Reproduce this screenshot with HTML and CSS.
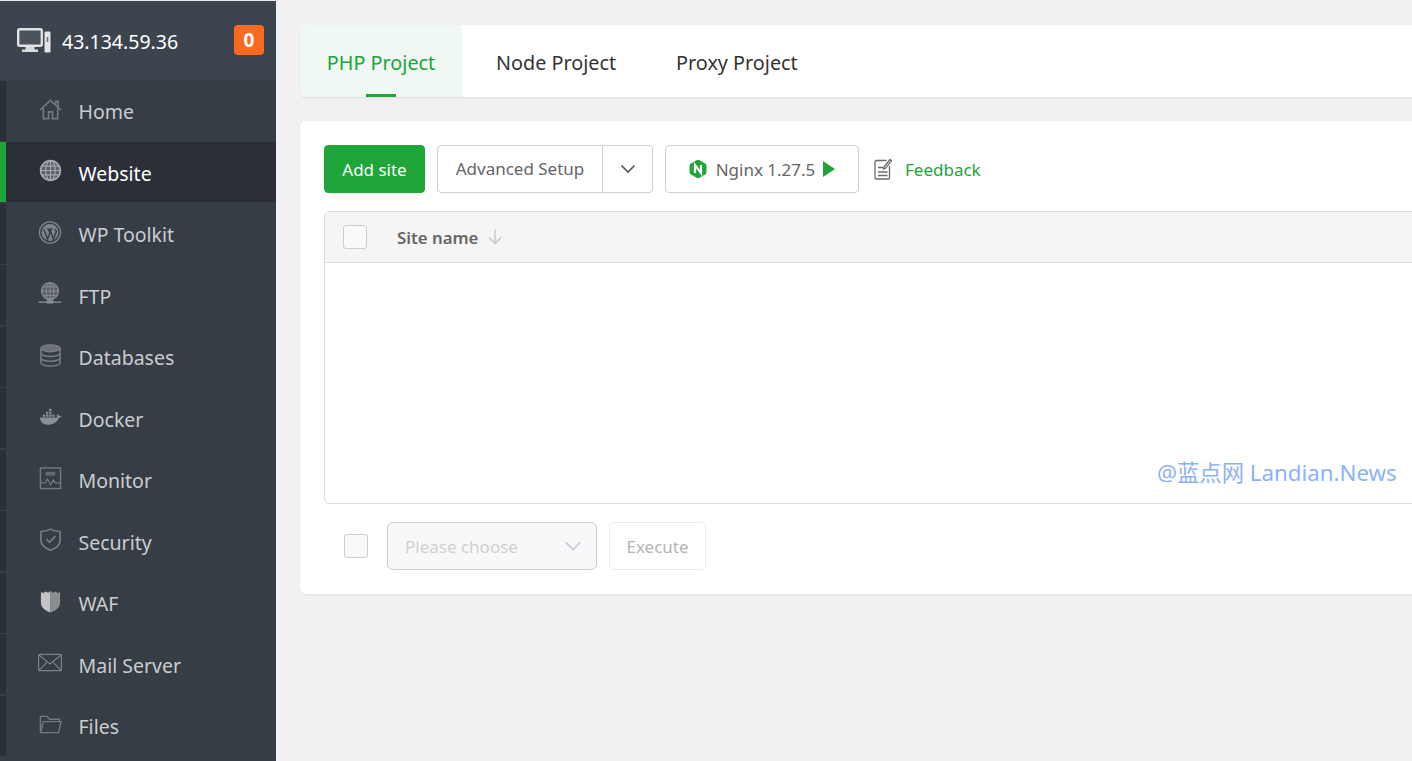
FILE: index.html
```html
<!DOCTYPE html>
<html lang="en">
<head>
<meta charset="utf-8">
<title>Website</title>
<link rel="stylesheet" href="styles.css">
</head>
<body>
<aside class="sidebar">
  <header class="server">
    <svg class="server-icon" viewBox="0 0 34 25"><rect x="1.200" y="1.200" width="23.600" height="16.500" rx="1.500" fill="#4b535b" stroke="#dfe1e3" stroke-width="2.400"/><path d="M8.500 19h9v2.500h3.500V24H5v-2.500h3.500z" fill="#d8dadc"/><rect x="27.500" y="3.500" width="6" height="21" rx="1" fill="#e3e5e7"/><rect x="29.700" y="9" width="1.600" height="5" fill="#6d747a"/></svg>
    <span class="server-ip">43.134.59.36</span>
    <span class="badge">0</span>
  </header>
  <nav class="nav">
    <a class="nav-item"><svg class="nav-icon" viewBox="0 0 24 24" fill="none" stroke="#73797f" stroke-width="1.700"><path d="M1 12.500 12 2.500l11 10M4.500 10.500v11h5.500v-7h4v7h5.500v-11M17.500 6.500V3.500h2.500v5.500"/></svg><span>Home</span></a>
    <a class="nav-item active"><svg class="nav-icon" viewBox="0 0 24 24" fill="none" stroke="#a5a8ab" stroke-width="1.200"><circle cx="12" cy="12" r="10.300" fill="#5d6167" stroke-width="1.800"/><ellipse cx="12" cy="12" rx="5" ry="10.300"/><path d="M12 1.700v20.600M1.700 12h20.600M3 7.500h18M3 16.500h18"/></svg><span>Website</span></a>
    <a class="nav-item"><svg class="nav-icon wide" viewBox="0 0 24 24" fill="none" stroke="#80858a"><circle cx="12" cy="12" r="11" stroke-width="1.300"/><circle cx="12" cy="12" r="8.800" fill="#80858a" stroke="none"/><path d="M5.500 8.500 9.500 19l2.500-7-1.800-3.500M9 8.500h6M12 8.500 15.500 19l2.800-7c.6-1.500-.3-2.800-1.300-3.500" stroke="#363d44" stroke-width="1.500"/></svg><span>WP Toolkit</span></a>
    <a class="nav-item"><svg class="nav-icon wide" viewBox="0 0 24 24" fill="none" stroke="#8a8f93" stroke-width="1"><circle cx="12" cy="9.500" r="8.800" fill="#5a6066" stroke-width="1.400"/><ellipse cx="12" cy="9.500" rx="4" ry="8.800"/><path d="M12 .7v17.600M3.200 9.500h17.600M4.500 5h15M4.500 14h15"/><path d="M0 21h24" stroke-width="1.400"/><rect x="8.500" y="19" width="7" height="3.500" fill="#8a8f93" stroke="none"/></svg><span>FTP</span></a>
    <a class="nav-item"><svg class="nav-icon db" viewBox="0 0 24 24" fill="none" stroke="#7a7f84" stroke-width="1.500"><ellipse cx="12" cy="4.500" rx="10" ry="3.500" fill="#6a7075"/><path d="M2 4.500v15c0 2 4.500 3.500 10 3.500s10-1.500 10-3.500v-15M2 9.500c0 2 4.500 3.500 10 3.500s10-1.500 10-3.500M2 14.500c0 2 4.500 3.500 10 3.500s10-1.500 10-3.500"/></svg><span>Databases</span></a>
    <a class="nav-item"><svg class="nav-icon" viewBox="0 0 24 24" fill="#8a8f93"><path d="M1 13h17.500c.6-1.300.4-2.600 0-3.600 1 .3 1.800 1 2.100 1.900.9-.3 2-.2 2.900.3-.6 1.400-1.700 2-3.100 2.100C19 18 15 20.500 9 20.500c-4.500 0-7.600-2.500-8-7.500z"/><path d="M4 10h2.500v2.200H4zM7.300 10h2.500v2.200H7.300zM10.600 10h2.500v2.200h-2.500zM13.900 10h2.300v2.200h-2.300zM7.300 7h2.500v2.200H7.300zM10.600 7h2.500v2.200h-2.500zM10.600 4h2.500v2.200h-2.500z"/></svg><span>Docker</span></a>
    <a class="nav-item"><svg class="nav-icon" viewBox="0 0 24 24" fill="none" stroke="#73797f" stroke-width="1.500"><rect x="1.500" y="1" width="21" height="21.500"/><rect x="7" y="5" width="10" height="4" fill="#63696f" stroke="none"/><path d="M1.500 16.500h5l2.500-4 3 6 3-5 2 3h5.500" stroke-width="1.200"/></svg><span>Monitor</span></a>
    <a class="nav-item"><svg class="nav-icon" viewBox="0 0 24 24" fill="none" stroke="#7a7f84" stroke-width="1.700"><path d="M12 1.200c3 1.600 6.500 2.400 10 2.400v9.400c0 4.600-4 8-10 10.200C6 20.800 2 17.600 2 13V3.600c3.500 0 7-.8 10-2.400z"/><path d="m7.500 11.500 3.500 3.500 6-6.500"/></svg><span>Security</span></a>
    <a class="nav-item"><svg class="nav-icon" viewBox="0 0 24 24"><path d="M12 1 9.500 2.800 7 1.500 4.500 3 2 2v11c0 5 4 8.500 10 10.500z" fill="#c2c4c6"/><path d="M12 1l2.500 1.800L17 1.500 19.500 3 22 2v11c0 5-4 8.500-10 10.500z" fill="#8a8e92"/></svg><span>WAF</span></a>
    <a class="nav-item"><svg class="nav-icon wide" viewBox="0 0 24 18" fill="none" stroke="#7c8186" stroke-width="1.200"><rect x=".6" y=".8" width="22.800" height="16.400" rx="1"/><path d="m1 1.500 11 9 11-9M1 16.800l7.800-8M23 16.800l-7.800-8"/></svg><span>Mail Server</span></a>
    <a class="nav-item"><svg class="nav-icon" viewBox="0 0 24 24" fill="none" stroke="#73797f" stroke-width="1.500"><path d="M1.500 20.500V3.500h7l2.500 3h10.500v2.500"/><path d="M1.500 20.500 4.500 9h18.500l-2.500 11.500z"/></svg><span>Files</span></a>
  </nav>
</aside>
<main class="main">
  <section class="card tabs">
    <a class="tab active">PHP Project</a>
    <a class="tab">Node Project</a>
    <a class="tab">Proxy Project</a>
  </section>
  <section class="card panel">
    <div class="toolbar">
      <button class="btn btn-primary">Add site</button>
      <div class="split">
        <span class="split-label">Advanced Setup</span>
        <span class="split-caret"><svg class="caret" viewBox="0 0 16 10" fill="none" stroke="#555" stroke-width="1.700"><path d="m1.500 1.500 6.500 6.500 6.500-6.500"/></svg></span>
      </div>
      <button class="btn btn-nginx">
        <svg class="ngx" viewBox="0 0 18 20"><path d="M9 .8a2 2 0 0 1 1 .3l6.500 3.700a2 2 0 0 1 1 1.700v7a2 2 0 0 1-1 1.700L10 19a2 2 0 0 1-2 0l-6.500-3.800a2 2 0 0 1-1-1.700v-7a2 2 0 0 1 1-1.700L8 1.100a2 2 0 0 1 1-.3z" fill="#20a53a"/><path d="M6 14V6l6 8V6" fill="none" stroke="#fff" stroke-width="2.200"/></svg>
        <span>Nginx 1.27.5</span>
        <svg class="play" viewBox="0 0 12 16"><path d="M0 0l12 8-12 8z" fill="#20a53a"/></svg>
      </button>
      <a class="feedback">
        <svg class="fb-icon" viewBox="0 0 18 22" fill="none" stroke="#6b6b6b" stroke-width="1.300"><path d="M12.500 2.500H2.200a1.200 1.200 0 0 0-1.200 1.200v16.100a1.200 1.200 0 0 0 1.200 1.200h12.100a1.200 1.200 0 0 0 1.200-1.200V8"/><path d="M4 9.500h5M4 14h9.500M4 17.500h9.500"/><path d="m10 9 6-7.500 1.500 1.300-6 7.500-2 .7z" fill="#fff"/></svg>
        <span>Feedback</span>
      </a>
    </div>
    <div class="table">
      <div class="table-head">
        <span class="check"></span>
        <span class="th">Site name</span>
        <svg class="sort" viewBox="0 0 14 16" fill="none" stroke="#c4c4c4" stroke-width="1.300"><path d="M7 .5v14M1 8.500l6 6 6-6"/></svg>
      </div>
      <div class="table-body"></div>
    </div>
    <div class="batch">
      <span class="check"></span>
      <div class="select"><span>Please choose</span><svg class="caret" viewBox="0 0 16 10" fill="none" stroke="#c0c4cc" stroke-width="1.300"><path d="m.5 1 7.500 7.500L15.500 1"/></svg></div>
      <button class="btn btn-disabled">Execute</button>
    </div>
  </section>
  <div class="watermark">@蓝点网 Landian.News</div>
</main>
</body>
</html>
```
FILE: styles.css
```css
* { box-sizing: border-box; }
html, body { height: 100%; }
body {
  margin: 0;
  display: flex;
  height: 761px;
  overflow: hidden;
  background: #f1f1f1;
  font-family: "Noto Sans", "Noto Sans CJK SC", sans-serif;
  color: #333;
}
button { font-family: inherit; }

.sidebar {
  flex: 0 0 276px;
  background: #363d44;
  overflow: hidden;
}
.server {
  display: flex;
  align-items: center;
  height: 79.500px;
  margin-bottom: 1px;
  padding: 0 12px 0 17px;
  background: #3c444d;
  border-top: 1px solid #e8e8e8;
}
.server-icon { width: 34px; height: 25px; flex: none; }
.server-ip { margin-left: 11px; padding-top: 2px; font-size: 19.500px; color: #fff; flex: 1; }
.badge {
  width: 30px;
  height: 30px;
  border-radius: 4px;
  background: #fb6a21;
  color: #fff;
  font-weight: 700;
  font-size: 19px;
  line-height: 30px;
  text-align: center;
}
.nav { display: flex; flex-direction: column; gap: 1.500px; }
.nav-item {
  display: flex;
  align-items: center;
  flex: none;
  height: 60px;
  padding-left: 33px;
  padding-top: 2px;
  border-left: 6px solid #2b2f37;
  color: #c9cdd1;
  font-size: 19.500px;
}
.nav-item.active {
  border-left-color: #20a53a;
  background: #2b2f37;
  color: #fff;
}
.nav-icon { width: 23px; height: 23px; flex: none; margin-right: 16.500px; margin-top: -5px; }
.nav-icon.wide { width: 24px; margin-left: -1px; margin-right: 16.500px; }

.main {
  position: relative;
  flex: 1;
  min-width: 0;
  overflow: hidden;
  padding: 25px 0 0 24px;
}
.card {
  margin-right: -20px;
  background: #fff;
  border-radius: 6px;
  box-shadow: 0 1px 2px rgba(0, 0, 0, .08);
}
.tabs { display: flex; height: 72px; margin-bottom: 24px; overflow: hidden; }
.tab {
  position: relative;
  padding: 0 30px;
  font-size: 19.800px;
  line-height: 75px;
  color: #333;
}
.tab.active {
  width: 162px;
  margin-right: 4px;
  padding: 0;
  text-align: center;
  background: #eff8f2;
  color: #20a53a;
}
.tab.active::after {
  content: "";
  position: absolute;
  left: 66px;
  bottom: 0;
  width: 30px;
  height: 3px;
  background: #20a53a;
}
.panel { padding: 24px 0 24px 24px; height: 473px; }
.toolbar { display: flex; align-items: center; gap: 12px; height: 48px; margin-bottom: 18px; }
.btn {
  height: 48px;
  border-radius: 4px;
  border: 1px solid #d0d0d0;
  background: #fff;
  font-size: 17px;
  cursor: pointer;
}
.btn-primary { width: 101px; padding: 0; border-color: #20a53a; background: #20a53a; color: #fff; }
.split {
  display: flex;
  width: 216px;
  height: 48px;
  border: 1px solid #d0d0d0;
  border-radius: 4px;
  font-size: 17px;
  color: #666;
}
.split-label { width: 165px; border-right: 1px solid #d0d0d0; line-height: 46px; text-align: center; }
.split-caret { display: flex; flex: 1; align-items: center; justify-content: center; }
.caret { width: 16px; height: 10px; }
.btn-nginx {
  display: flex;
  align-items: center;
  justify-content: center;
  width: 194px;
  padding: 0;
  color: #666;
}
.ngx { width: 18px; height: 20px; margin-right: 9px; }
.play { width: 12px; height: 16px; margin-left: 8px; }
.feedback { display: flex; align-items: center; margin-left: 3px; font-size: 17px; color: #20a53a; }
.fb-icon { width: 18px; height: 22px; margin-right: 13px; }
.table {
  height: 293px;
  border: 1px solid #dcdcdc;
  border-radius: 6px;
  overflow: hidden;
}
.table-head {
  display: flex;
  align-items: center;
  height: 51px;
  padding-left: 18px;
  background: #f5f5f5;
  border-bottom: 1px solid #dcdcdc;
}
.check {
  flex: none;
  width: 24px;
  height: 24px;
  border: 1px solid #ccc;
  border-radius: 3px;
  background: #f9f9fb;
}
.th { margin-left: 30px; font-size: 16.800px; font-weight: 600; color: #666; }
.sort { width: 14px; height: 16px; margin-left: 10px; }
.batch { display: flex; align-items: center; margin-top: 18px; padding-left: 20px; }
.select {
  display: flex;
  align-items: center;
  justify-content: space-between;
  width: 210px;
  height: 48px;
  margin-left: 19px;
  padding: 0 15px 0 17px;
  border: 1px solid #ccc;
  border-radius: 6px;
  background: #f8f8fa;
  font-size: 17px;
  color: #d0d0d0;
}
.btn-disabled {
  width: 97px;
  margin-left: 12px;
  padding: 0;
  border-color: #ebebeb;
  color: #b5b5b5;
}
.watermark {
  position: absolute;
  left: 881px;
  top: 458px;
  font-size: 22.300px;
  line-height: 30px;
  white-space: nowrap;
  color: #8db2f7;
}
```
